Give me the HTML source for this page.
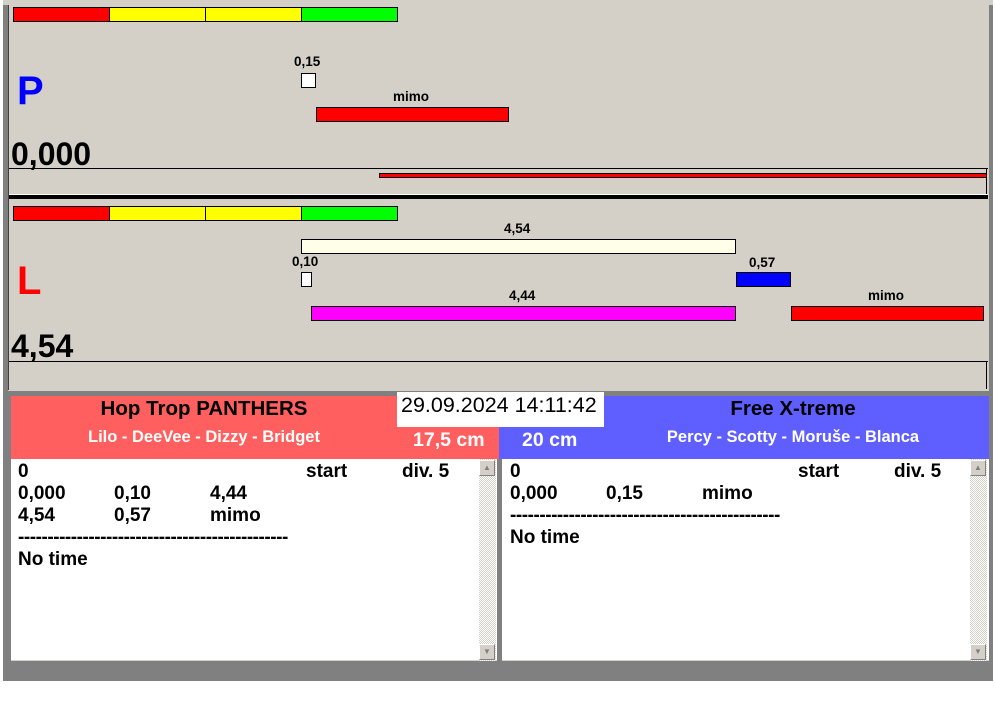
<!DOCTYPE html>
<html><head><style>
body{margin:0;width:995px;height:716px;background:#fff;position:relative;overflow:hidden;font-family:"Liberation Sans",Arial,sans-serif;font-weight:bold}
div{position:absolute;box-sizing:border-box}
.b{border:1px solid #000}
.t{font-size:13.5px;color:#000}
.sb{background:repeating-conic-gradient(#d4d0c8 0 25%,#fff 0 50%) 0 0/2px 2px;width:17px}
.ar{width:16px;height:16px;background:#d4d0c8;border:1px solid;border-color:#fff #808080 #808080 #fff;font-size:8px;color:#808080;text-align:center;line-height:14px}
.l{font-size:19px;white-space:pre;line-height:22px}
.d{letter-spacing:-0.46px}
</style></head><body>
<div style="left:3px;top:0;width:990px;height:681px;background:#808080"></div>
<div style="left:8px;top:4px;width:981px;height:387px;background:#d4d0c8"></div>
<div style="left:3px;top:0;width:990px;height:5px;background:#d4d0c8"></div>
<div style="left:8px;top:5px;width:1px;height:385px;background:#404040"></div>
<!-- top panel -->
<div class="b" style="left:13px;top:7px;width:97px;height:15px;background:#f00"></div>
<div class="b" style="left:109px;top:7px;width:97px;height:15px;background:#ff0"></div>
<div class="b" style="left:205px;top:7px;width:97px;height:15px;background:#ff0"></div>
<div class="b" style="left:301px;top:7px;width:97px;height:15px;background:#0f0"></div>
<div style="left:17px;top:68px;font-size:40px;color:#00f;line-height:46px">P</div>
<div class="t" style="left:294px;top:54px">0,15</div>
<div class="b" style="left:301px;top:73px;width:15px;height:15px;background:#fff"></div>
<div class="t" style="left:393px;top:89px">mimo</div>
<div class="b" style="left:316px;top:107px;width:193px;height:15px;background:#f00"></div>
<div style="left:11px;top:136px;font-size:32px;line-height:36px">0,000</div>
<div style="left:9px;top:168px;width:979px;height:1px;background:#000"></div>
<div style="left:986px;top:168px;width:1px;height:27px;background:#000"></div>
<div class="b" style="left:379px;top:173px;width:608px;height:5px;background:#f00"></div>
<div style="left:9px;top:194px;width:979px;height:1px;background:#fff"></div>
<div style="left:9px;top:195px;width:979px;height:4px;background:#000"></div>
<!-- lower panel -->
<div class="b" style="left:13px;top:206px;width:97px;height:15px;background:#f00"></div>
<div class="b" style="left:109px;top:206px;width:97px;height:15px;background:#ff0"></div>
<div class="b" style="left:205px;top:206px;width:97px;height:15px;background:#ff0"></div>
<div class="b" style="left:301px;top:206px;width:97px;height:15px;background:#0f0"></div>
<div class="t" style="left:504px;top:221px">4,54</div>
<div class="b" style="left:301px;top:239px;width:435px;height:15px;background:#ffffe8"></div>
<div class="t" style="left:292px;top:254px">0,10</div>
<div class="b" style="left:301px;top:272px;width:11px;height:15px;background:#fff"></div>
<div class="t" style="left:749px;top:255px">0,57</div>
<div class="b" style="left:736px;top:272px;width:55px;height:15px;background:#00f"></div>
<div style="left:17px;top:258px;font-size:40px;color:#f00;line-height:46px">L</div>
<div class="t" style="left:509px;top:288px">4,44</div>
<div class="b" style="left:311px;top:306px;width:425px;height:15px;background:#f0f"></div>
<div class="t" style="left:868px;top:288px">mimo</div>
<div class="b" style="left:791px;top:306px;width:193px;height:15px;background:#f00"></div>
<div style="left:11px;top:328px;font-size:32px;line-height:36px">4,54</div>
<div style="left:9px;top:361px;width:979px;height:1px;background:#000"></div>
<div style="left:986px;top:361px;width:1px;height:28px;background:#000"></div>
<!-- headers -->
<div style="left:11px;top:396px;width:488px;height:63px;background:#ff5f5f"></div>
<div style="left:499px;top:396px;width:490px;height:63px;background:#5f5fff"></div>
<div style="left:11px;top:396px;width:386px;text-align:center;font-size:20.5px;line-height:26px">Hop Trop PANTHERS</div>
<div style="left:11px;top:427px;width:386px;text-align:center;font-size:16.5px;color:#fff;line-height:20px">Lilo - DeeVee - Dizzy - Bridget</div>
<div style="left:413px;top:427px;font-size:19.5px;color:#fff;line-height:26px">17,5 cm</div>
<div style="left:522px;top:427px;font-size:19.5px;color:#fff;line-height:26px">20 cm</div>
<div style="left:603px;top:396px;width:380px;text-align:center;font-size:20.5px;line-height:26px">Free X-treme</div>
<div style="left:603px;top:427px;width:380px;text-align:center;font-size:16.5px;color:#fff;line-height:20px">Percy - Scotty - Moruše - Blanca</div>
<div style="left:397px;top:392px;width:207px;height:35px;background:#fff;font-weight:normal;font-size:21.5px;padding:0 0 0 4px;line-height:26px;white-space:nowrap">29.09.2024 14:11:42</div>
<!-- lists -->
<div style="left:11px;top:459px;width:486px;height:202px;background:#fff;border-bottom:1px solid #d4d0c8"></div>
<div class="l" style="left:18px;top:461px">0</div><div class="l" style="left:306px;top:461px">start</div><div class="l" style="left:402px;top:461px">div. 5</div>
<div class="l" style="left:18px;top:483px">0,000</div><div class="l" style="left:114px;top:483px">0,10</div><div class="l" style="left:210px;top:483px">4,44</div>
<div class="l" style="left:18px;top:505px">4,54</div><div class="l" style="left:114px;top:505px">0,57</div><div class="l" style="left:210px;top:505px">mimo</div>
<div class="l d" style="left:18px;top:527px">----------------------------------------------</div>
<div class="l" style="left:18px;top:549px">No time</div>
<div class="sb" style="left:479px;top:459px;height:202px"></div>
<div class="ar" style="left:479px;top:460px">▲</div><div class="ar" style="left:479px;top:644px">▼</div>

<div style="left:502px;top:459px;width:487px;height:202px;background:#fff;border-bottom:1px solid #d4d0c8"></div>
<div class="l" style="left:510px;top:461px">0</div><div class="l" style="left:798px;top:461px">start</div><div class="l" style="left:894px;top:461px">div. 5</div>
<div class="l" style="left:510px;top:483px">0,000</div><div class="l" style="left:606px;top:483px">0,15</div><div class="l" style="left:702px;top:483px">mimo</div>
<div class="l d" style="left:510px;top:505px">----------------------------------------------</div>
<div class="l" style="left:510px;top:527px">No time</div>
<div class="sb" style="left:970px;top:459px;height:202px"></div>
<div class="ar" style="left:970px;top:460px">▲</div><div class="ar" style="left:970px;top:644px">▼</div>
</body></html>
